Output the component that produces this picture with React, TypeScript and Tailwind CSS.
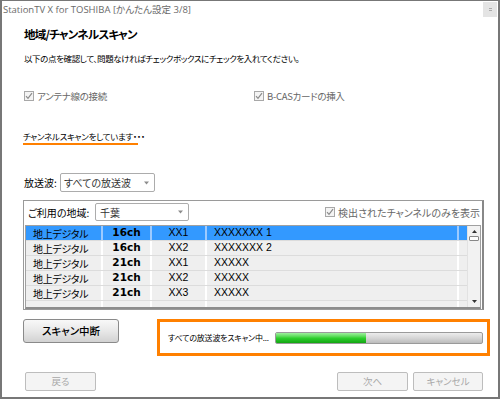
import { useState } from "react";

const rows = [
  { type: "地上デジタル", ch: "16ch", id: "XX1", name: "XXXXXXX 1" },
  { type: "地上デジタル", ch: "16ch", id: "XX2", name: "XXXXXXX 2" },
  { type: "地上デジタル", ch: "21ch", id: "XX1", name: "XXXXX" },
  { type: "地上デジタル", ch: "21ch", id: "XX2", name: "XXXXX" },
  { type: "地上デジタル", ch: "21ch", id: "XX3", name: "XXXXX" },
];

const Check = () => (
  <span className="w-[10px] h-[10px] border border-[#a8a8a8] bg-[#f4f4f4] flex items-center justify-center shrink-0">
    <svg width="8" height="8" viewBox="0 0 8 8">
      <path d="M1 4.2 L3 6.3 L7 1.2" fill="none" stroke="#8a8a8a" strokeWidth="1.2" />
    </svg>
  </span>
);

const Arrow = () => (
  <svg width="7" height="4" viewBox="0 0 7 4">
    <path d="M1 0.5 L6 0.5 L3.5 3.5 Z" fill="#8c8c8c" />
  </svg>
);

const App = () => {
  const [selected] = useState(0);

  return (
    <div
      className="w-[500px] h-[399px] bg-white border-2 border-t border-[#777] relative text-black [font-feature-settings:'palt'] overflow-hidden"
      style={{ fontFamily: '"Noto Sans CJK JP", sans-serif' }}
    >
      {/* title */}
      <div className="h-[18px] pl-[1px] flex items-center text-[9.5px] text-[#6a6a6a] [font-family:'Open_Sans','Noto_Sans_CJK_JP',sans-serif]">
        StationTV X for TOSHIBA [かんたん設定 3/8]
      </div>
      <div className="absolute right-[1px] top-[1px] w-[14px] h-[15px] bg-[#e4e4e4] flex items-center justify-center">
        <span className="w-[3px] h-[3px] border-y border-[#aaa]" />
      </div>

      <div className="px-[22px]">
        <div className="h-[32px] flex items-center text-[11.5px] font-bold tracking-[-0.8px]">地域/チャンネルスキャン</div>
        <div className="h-[14px] flex items-center text-[8.5px] tracking-[-0.4px] whitespace-nowrap">
          以下の点を確認して、問題なければチェックボックスにチェックを入れてください。
        </div>

        <div className="mt-[24px] h-[14px] flex items-center text-[9.5px] tracking-[-0.3px] text-[#666]">
          <div className="w-[230px] flex items-center gap-[3px]">
            <Check />
            <span>アンテナ線の接続</span>
          </div>
          <div className="flex items-center gap-[3px]">
            <Check />
            <span>B-CASカードの挿入</span>
          </div>
        </div>

        <div className="mt-[26px] ml-[-1px] w-[115px] h-[16px] border-b-2 border-[#ff8000] flex items-center text-[8.5px] tracking-[-0.3px] whitespace-nowrap">
          チャンネルスキャンをしています・・・
        </div>

        <div className="mt-[28px] h-[19px] flex items-center text-[10px]">
          <span className="w-[36px]">放送波:</span>
          <div className="w-[95px] h-[19px] border border-[#acacac] rounded-[2px] flex items-center justify-between pl-[3px] pr-[4px] text-[#333]">
            <span>すべての放送波</span>
            <Arrow />
          </div>
        </div>

        {/* group */}
        <div className="mt-[8px] ml-[-1px] w-[461px] h-[110px] border border-[#9a9a9a] border-r-2 border-r-[#888]">
          <div className="mt-[2px] h-[18px] flex items-center text-[10px] pl-[4px]">
            <span className="w-[67px]">ご利用の地域:</span>
            <div className="w-[94px] h-[18px] border border-[#acacac] rounded-[2px] flex items-center justify-between pl-[4px] pr-[4px] text-[#333]">
              <span>千葉</span>
              <Arrow />
            </div>
            <div className="ml-auto mr-[2px] flex items-center gap-[3px] text-[#666]">
              <Check />
              <span>検出されたチャンネルのみを表示</span>
            </div>
          </div>

          <div className="mt-[4px] ml-[1px] w-[456px] h-[84px] border border-[#a0a0a0] border-b-2 border-b-[#8c8c8c] flex bg-[#efefef]">
            <div className="flex-1 flex flex-col overflow-hidden">
              {rows.concat([{ type: "", ch: "", id: "", name: "" }]).map((r, i) => {
                const sel = i === selected;
                const cell = sel ? "border-r-2 border-[#9ccaff]" : "border-r-2 border-white";
                return (
                  <div
                    key={i}
                    className={`h-[15px] shrink-0 flex border-b border-[#dcdcdc] ${sel ? "bg-[#3399ff]" : "bg-[#efefef]"}`}
                  >
                    <div className={`w-[77px] pl-[7px] flex items-center text-[10px] tracking-[-0.3px] ${cell}`}>{r.type}</div>
                    <div
                      className={`w-[49px] flex items-center justify-center text-[10.5px] font-bold ${cell}`}
                      style={{ fontFamily: '"DejaVu Sans", sans-serif' }}
                    >
                      {r.ch}
                    </div>
                    <div
                      className={`w-[55px] flex items-center justify-center text-[10.5px] ${cell}`}
                      style={{ fontFamily: '"Liberation Sans", sans-serif' }}
                    >
                      {r.id}
                    </div>
                    <div
                      className={`w-[252px] pl-[7px] flex items-center text-[10.5px] ${cell}`}
                      style={{ fontFamily: '"Liberation Sans", sans-serif' }}
                    >
                      {r.name}
                    </div>
                    <div className="w-[8px]" />
                  </div>
                );
              })}
            </div>
            {/* scrollbar */}
            <div className="w-[13px] bg-[#f2f2f2] border-l border-[#e2e2e2] flex flex-col items-center justify-between py-[4px]">
              <div className="flex flex-col items-center gap-[3px]">
                <svg width="5" height="3" viewBox="0 0 5 3">
                  <path d="M0 3 L5 3 L2.5 0 Z" fill="#333" />
                </svg>
                <span className="w-[10px] h-[5px] border border-[#888] rounded-[1px] bg-white" />
              </div>
              <svg width="5" height="3" viewBox="0 0 5 3">
                <path d="M0 0 L5 0 L2.5 3 Z" fill="#333" />
              </svg>
            </div>
          </div>
        </div>

        {/* scan row */}
        <div className="mt-[9px] flex items-start">
          <button className="shrink-0 ml-[-1px] w-[96px] h-[24px] rounded-[3px] border border-[#8a8a8a] bg-gradient-to-b from-[#f8f8f8] via-[#e8e8e8] to-[#d2d2d2] text-[10.5px] font-medium flex items-center justify-center">
            スキャン中断
          </button>
          <div className="shrink-0 ml-[38px] w-[333px] h-[37px] border-[3px] border-[#ff8000] flex items-center pl-[8px] gap-[5px]">
            <span className="text-[8px] w-[102px] whitespace-nowrap tracking-[-0.2px]">すべての放送波をスキャン中...</span>
            <div className="w-[208px] h-[12px] rounded-[2px] border border-[#9a9a9a] flex overflow-hidden bg-gradient-to-b from-[#ececec] via-[#d6d6d6] to-[#bcbcbc]">
              <div className="w-[90px] h-full bg-gradient-to-b from-[#9cf09c] via-[#2ed12e] to-[#12a512]" />
            </div>
          </div>
        </div>

        {/* bottom buttons */}
        <div className="mt-[16px] mr-[-7px] flex items-center justify-between">
          <button className="ml-[1px] w-[71px] h-[19px] rounded-[2px] border border-[#bdbdbd] bg-[#f4f4f4] text-[9.5px] text-[#a8a8a8]">
            戻る
          </button>
          <div className="flex gap-[5px]">
            <button className="w-[71px] h-[19px] rounded-[2px] border border-[#bdbdbd] bg-[#f4f4f4] text-[9.5px] text-[#a8a8a8]">
              次へ
            </button>
            <button className="w-[70px] h-[19px] rounded-[2px] border border-[#bdbdbd] bg-[#f4f4f4] text-[9.5px] text-[#a8a8a8]">
              キャンセル
            </button>
          </div>
        </div>
      </div>
    </div>
  );
};

export default App;
